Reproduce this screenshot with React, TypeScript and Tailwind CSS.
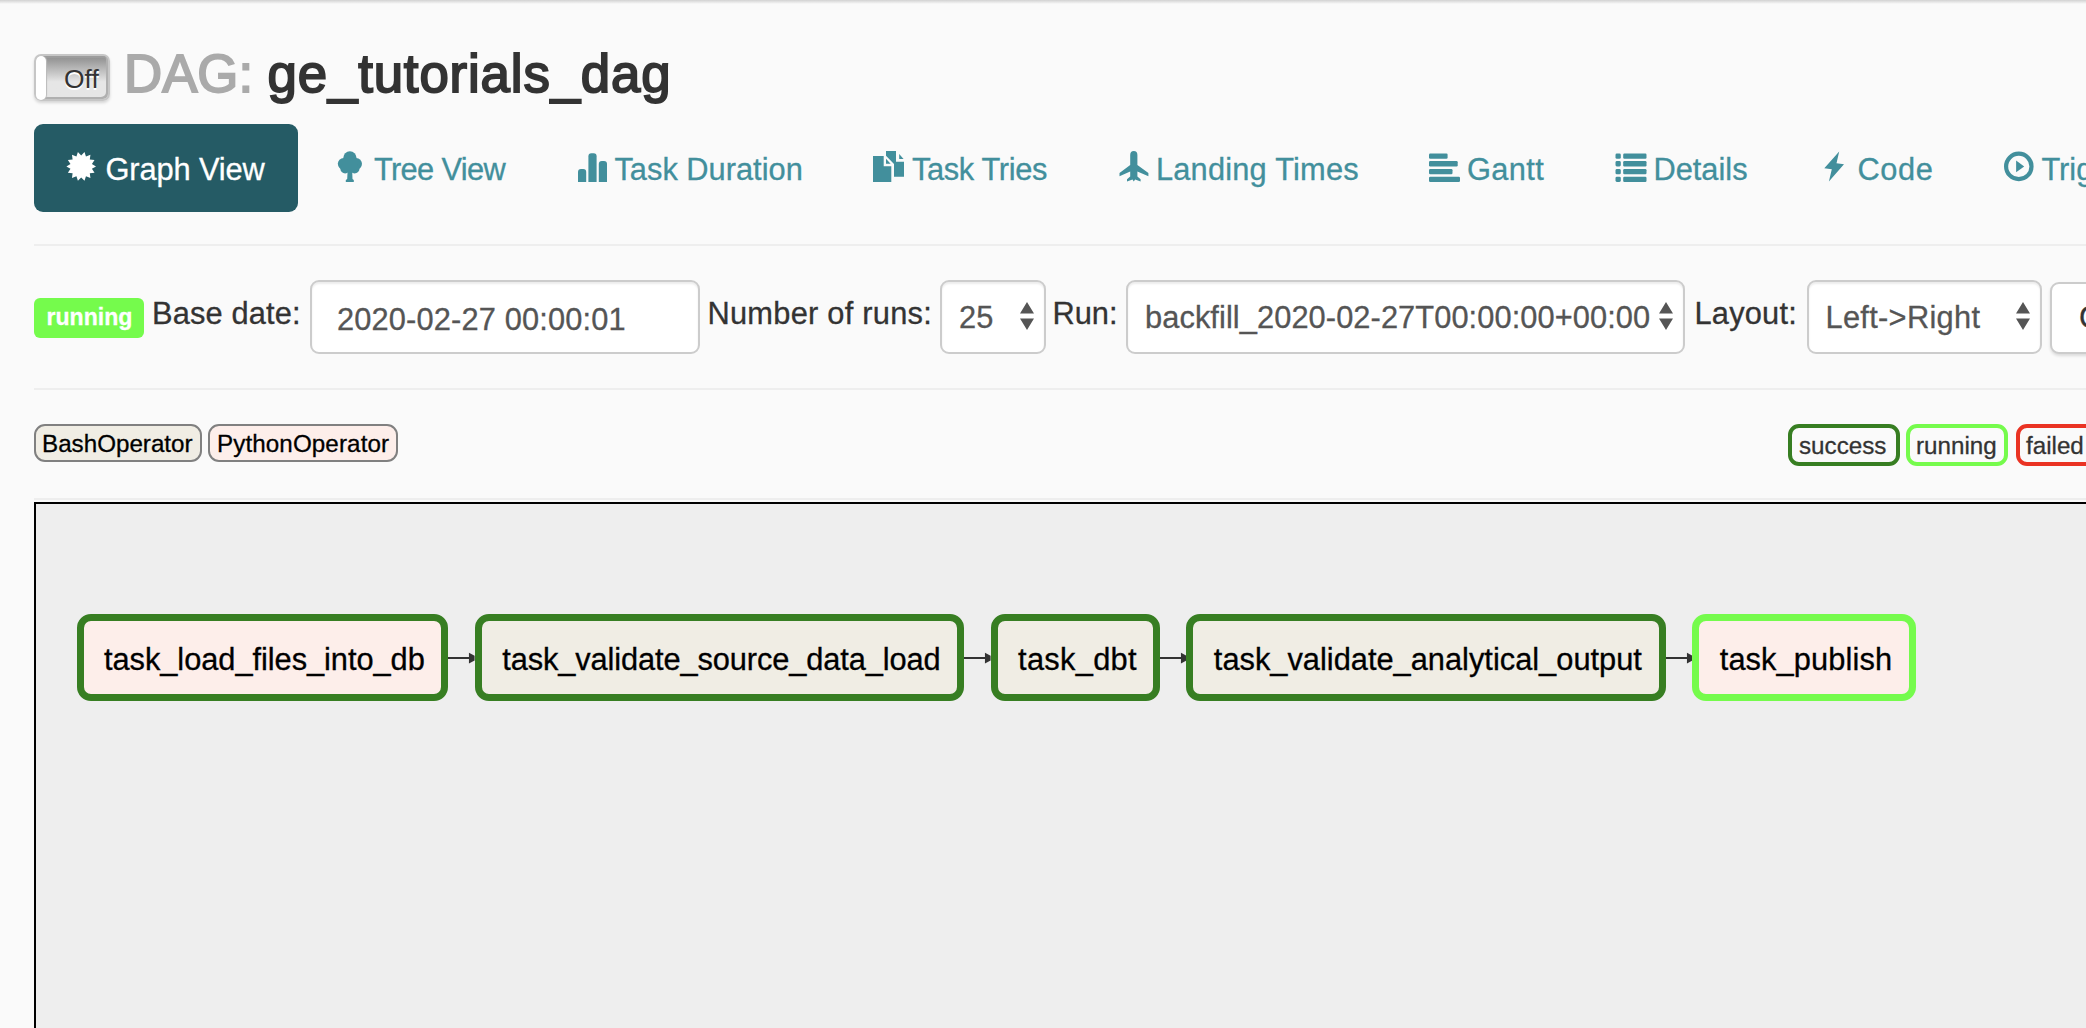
import type { ReactNode } from "react";

const certificate = Array.from({ length: 28 }, (_, i) => {
  const r = i % 2 === 0 ? 14.8 : 11;
  const a = (i * Math.PI) / 14;
  return `${(14.2 + r * Math.cos(a)).toFixed(2)},${(15.4 + r * Math.sin(a)).toFixed(2)}`;
}).join(" ");

const icons: Record<string, ReactNode> = {
  graph: <polygon points={certificate} />,
  tree: (
    <>
      <circle cx="14.9" cy="6.8" r="6.6" />
      <circle cx="8.6" cy="12.8" r="5.8" />
      <circle cx="21.2" cy="12.8" r="5.8" />
      <circle cx="10.2" cy="17.6" r="4.9" />
      <circle cx="19.6" cy="17.6" r="4.9" />
      <rect x="8" y="8" width="14" height="12" />
      <path d="M12.6 20h4.6l.3 8 1.3 1v1.9h-8V29l1.4-1z" />
    </>
  ),
  duration: (
    <>
      <path d="M2 31V21a3 3 0 0 1 3-3h2.2a3 3 0 0 1 3 3V31z" />
      <path d="M12.4 31V5.3a3 3 0 0 1 3-3h2.2a3 3 0 0 1 3 3V31z" />
      <path d="M22.8 31V13a3 3 0 0 1 3-3h2.2a3 3 0 0 1 3 3V31z" />
    </>
  ),
  tries: (
    <path d="M0 5H10.7V15.3H18.3V30.9H0ZM13 7.7L17.6 12.7H13ZM13 0H23V10.7H31V25.7H21V13L13 4.7ZM26.2 3L30.6 8H26.2Z" />
  ),
  landing: (
    <path d="M13.2 4a3.600 4 0 0 1 7.200 0V14L31.400 22V25.300L20.400 20.500V25.500L23.600 28.300V30.600L18.100 28.500L16.800 30.400L15.500 28.500L10 30.600V28.300L13.200 25.500V20.500L2.500 25.300V22L13.200 14Z" />
  ),
  gantt: (
    <>
      <rect x="1" y="2.5" width="18.6" height="5.3" rx="1.2" />
      <rect x="1" y="10.1" width="28.7" height="5.3" rx="1.2" />
      <rect x="1" y="18" width="23.5" height="5.3" rx="1.2" />
      <rect x="1" y="25.7" width="31" height="5.3" rx="1.2" />
    </>
  ),
  details: (
    <>
      {[2.5, 10.1, 18, 25.7].map((y) => (
        <g key={y}>
          <rect x="0.5" y={y} width="5.3" height="5.3" rx="1.4" />
          <rect x="8.2" y={y} width="23.3" height="5.3" rx="1.2" />
        </g>
      ))}
    </>
  ),
  code: <path d="M20.2 0.600L17.500 12.300L25 13.200L9.900 30.600L12.800 18.200L5.300 17.200Z" />,
  trigger: (
    <>
      <circle cx="15.8" cy="15.4" r="12.7" fill="none" stroke="currentColor" strokeWidth="4.2" />
      <path d="M13.1 9.600L21.200 15.400L13.100 21.200Z" />
    </>
  ),
};

const tabs = [
  { icon: "graph", label: "Graph View", cls: "w-[264px] bg-[#255b65] text-white tracking-[-0.12px]" },
  { icon: "tree", label: "Tree View", cls: "w-[236.2px] tracking-[-0.65px]" },
  { icon: "duration", label: "Task Duration", cls: "w-[293.1px]" },
  { icon: "tries", label: "Task Tries", cls: "w-[239.6px] tracking-[-0.35px]" },
  { icon: "landing", label: "Landing Times", cls: "w-[306.6px] tracking-[0.2px]" },
  { icon: "gantt", label: "Gantt", cls: "w-[182.1px] tracking-[0.4px]" },
  { icon: "details", label: "Details", cls: "w-[199.6px]" },
  { icon: "code", label: "Code", cls: "w-[179.6px] tracking-[0.6px]" },
  { icon: "trigger", label: "Trigger DAG", cls: "w-[280px]" },
];

const nodes = [
  { name: "task_load_files_into_db", cls: "w-[371.7px] border-[#377e22] bg-[#fdeeea] tracking-[-0.05px]" },
  { name: "task_validate_source_data_load", cls: "w-[489.2px] border-[#377e22] bg-[#f0ede4] tracking-[-0.12px]" },
  { name: "task_dbt", cls: "w-[169.2px] border-[#377e22] bg-[#f0ede4] tracking-[0.3px]" },
  { name: "task_validate_analytical_output", cls: "w-[479.3px] border-[#377e22] bg-[#f0ede4]" },
  { name: "task_publish", cls: "w-[223.6px] border-[#75fb4c] bg-[#fdeeea] tracking-[0.1px]" },
];

function Tab({ icon, label, cls }: { icon: string; label: string; cls: string }) {
  return (
    <li className={`flex h-[88px] shrink-0 items-start rounded-[9px] pl-[33px] pt-[23px] leading-[44px] ${cls}`}>
      <svg viewBox="0 0 31 31" className="mr-[7.5px] mt-1 size-[31px] shrink-0 overflow-visible" fill="currentColor">
        {icons[icon]}
      </svg>
      <span className="pt-px">{label}</span>
    </li>
  );
}

function Select({ value, cls }: { value: string; cls: string }) {
  return (
    <div
      className={`flex h-[74px] shrink-0 items-start justify-between rounded-[9px] border-2 border-[#ccc] bg-white pl-[17px] pr-[10px] pt-[13.5px] leading-[44px] text-[#555] shadow-[inset_0_2px_2px_rgba(0,0,0,0.075)] ${cls}`}
    >
      <span>{value}</span>
      <svg viewBox="0 0 14 28" className="mt-[6.5px] h-7 w-[14px] shrink-0" fill="#555">
        <path d="M7 0l7 11.5H0zM7 28l7-11.5H0z" />
      </svg>
    </div>
  );
}

function Edge() {
  return (
    <svg viewBox="0 0 26 12" className="h-3 w-[26.6px] shrink-0" preserveAspectRatio="none" fill="#333">
      <rect y="5" width="21" height="2" />
      <path d="M20.5 0.7L26 3.7V8.5L20.5 11.5Z" />
    </svg>
  );
}

export default function App() {
  return (
    <div className="relative h-[1028px] w-[2086px] overflow-hidden bg-[#fafafa] pl-[34px] font-['Liberation_Sans',Arial,sans-serif] text-[30.8px] text-[#333] [-webkit-text-stroke:0.3px]">
      <div className="absolute inset-x-0 top-0 h-1 bg-gradient-to-b from-[#d2d2d2] to-[#fafafa]" />

      <header className="flex h-[124px] items-start pt-[54px]">
        <div className="flex h-[47px] w-[76px] rounded-[7px] border-2 border-[#c6c6c6] bg-gradient-to-b from-[#8d8d8d] to-[#e6e6e6] to-60% shadow-[0_2px_3px_rgba(0,0,0,0.15),inset_-2px_-2px_0_#b0b0b0,inset_0_2px_0_#9c9c9c]">
          <div className="h-[44px] w-[10px] rounded-[5px] bg-white shadow-[1px_0_1px_#bbb]" />
          <span className="ml-[18px] mt-[5px] text-[26.4px] leading-[36px] [-webkit-text-stroke:0px] [text-shadow:0_2px_0_#fff]">
            Off
          </span>
        </div>
        <h3 className="-mt-[13px] ml-[14px] flex text-[52.8px] leading-[66px] [-webkit-text-stroke:1.9px]">
          <span className="w-[143.5px] text-[#aaa]">DAG:</span>
          <span className="tracking-[0.85px]">ge_tutorials_dag</span>
        </h3>
      </header>

      <ul className="flex gap-[4.4px] whitespace-nowrap text-[#428f9c]">
        {tabs.map((t) => (
          <Tab key={t.label} {...t} />
        ))}
      </ul>

      <hr className="mt-8 w-[2100px] border-t-2 border-[#eee]" />

      <div className="mt-[34px] flex w-[2200px] items-start whitespace-nowrap leading-[44px]">
        <span className="mt-[18px] h-10 w-[110px] shrink-0 rounded-[6px] bg-[#75fb4c] pl-[12.5px] text-[23.1px] font-bold leading-[38px] text-white">
          running
        </span>
        <label className="ml-2 mt-3 w-[158px] shrink-0 tracking-[0.15px]">Base date:</label>
        <div className="h-[74px] w-[390px] shrink-0 rounded-[9px] border-2 border-[#ccc] bg-white pl-[25px] pt-[15.5px] tracking-[0.15px] text-[#555] shadow-[inset_0_2px_2px_rgba(0,0,0,0.075)]">
          2020-02-27 00:00:01
        </div>
        <label className="ml-[7.5px] mt-3 w-[232.5px] shrink-0 tracking-[0.25px]">Number of runs:</label>
        <Select value="25" cls="w-[106px]" />
        <label className="ml-[6.5px] mt-3 w-[73.5px] shrink-0">Run:</label>
        <Select value="backfill_2020-02-27T00:00:00+00:00" cls="w-[559px] tracking-[0.08px]" />
        <label className="ml-[9.5px] mt-3 w-[112px] shrink-0 tracking-[0.2px]">Layout:</label>
        <Select value="Left->Right" cls="w-[235px] tracking-[0.3px]" />
        <div className="ml-[8.5px] mt-[2px] h-[72px] w-[120px] shrink-0 rounded-[9px] border-2 border-[#ccc] bg-white pl-[27px] pt-[11.5px] shadow-[0_2px_3px_rgba(0,0,0,0.12)]">
          Go
        </div>
      </div>

      <hr className="mt-[34px] w-[2100px] border-t-2 border-[#eee]" />

      <div className="mt-[34px] flex h-[74px] w-[2200px] items-start whitespace-nowrap text-[24.2px]">
        <div className="h-[38px] w-[168px] rounded-[11px] border-2 border-[#808080] bg-[#f0ede4] pl-[6px] leading-[36px] text-black">
          BashOperator
        </div>
        <div className="ml-[6px] h-[38px] w-[190px] rounded-[11px] border-2 border-[#808080] bg-[#fdeeea] pl-[7px] leading-[36px] tracking-[0.1px] text-black">
          PythonOperator
        </div>
        <div className="ml-[1390px] h-[42px] w-[112px] rounded-[11px] border-4 border-[#377e22] pl-[7px] leading-[35px]">
          success
        </div>
        <div className="ml-[6px] h-[42px] w-[102px] rounded-[11px] border-4 border-[#75fb4c] pl-[6px] leading-[35px]">
          running
        </div>
        <div className="ml-[8px] h-[42px] w-[80px] rounded-[11px] border-4 border-[#ea3323] pl-[6px] leading-[35px]">
          failed
        </div>
      </div>

      <hr className="w-[2100px] border-t-2 border-[#eee]" />

      <main className="mt-[2px] flex h-[540px] w-[2100px] items-start border-2 border-black bg-[#eee] pl-[40.5px] pt-[110px] text-black">
        {nodes.map((n, i) => (
          <div key={n.name} className="flex shrink-0 items-center">
            {i > 0 && <Edge />}
            <div className={`h-[87px] whitespace-nowrap rounded-[14px] border-[7px] pl-[20.5px] pt-[17px] leading-[44px] ${n.cls}`}>
              {n.name}
            </div>
          </div>
        ))}
      </main>
    </div>
  );
}
